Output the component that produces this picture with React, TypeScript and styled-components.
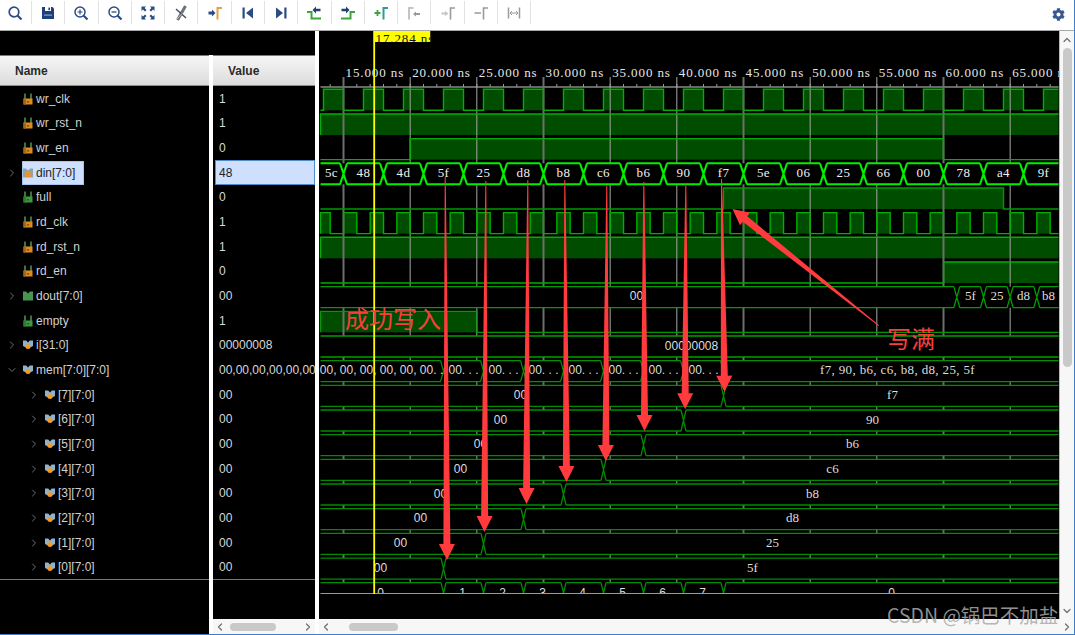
import React from "react";
import styled, { createGlobalStyle, css } from "styled-components";
import { ChevronDown, ChevronLeft, ChevronRight, ChevronUp } from "lucide-react";
import { FaCog } from "react-icons/fa";

const Global = createGlobalStyle`
  html, body { margin: 0; padding: 0; background: #fff; overflow: hidden; }
  #root { width: 1075px; height: 635px; }
`;

const Page = styled.div`
  position: relative;
  box-sizing: border-box;
  width: 1075px;
  height: 635px;
  display: flex;
  flex-direction: column;
  background: #fff;
  border-right: 1px solid #3f7fc8;
  border-bottom: 1px solid #3f7fc8;
  overflow: hidden;
  font-family: "Liberation Sans", Arial, sans-serif;
`;

const Toolbar = styled.div`
  box-sizing: border-box;
  height: 31px;
  flex: none;
  display: flex;
  align-items: center;
  padding-bottom: 5px;
  border-bottom: 1px solid #a8a8a8;
  background: #fff;
  & > :first-child { margin-left: -1.4px; }
`;

const ToolButton = styled.div`
  box-sizing: border-box;
  width: 33.3px;
  height: 23px;
  flex: none;
  display: flex;
  align-items: center;
  justify-content: center;
  border-right: 1px solid #e2e2e2;
`;

const GearButton = styled.div`
  margin-left: auto;
  padding-right: 9px;
  padding-top: 3px;
  display: flex;
  color: #38598f;
`;

const Main = styled.div`
  flex: 1;
  min-height: 0;
  display: flex;
`;

const LeftPane = styled.div`
  width: 314.5px;
  flex: none;
  display: flex;
  flex-direction: column;
`;

const TopBand = styled.div`
  height: 24px;
  flex: none;
  background: #000;
`;

const Columns = styled.div`
  flex: 1;
  min-height: 0;
  display: flex;
  gap: 4.5px;
`;

const NameColumn = styled.div`
  width: 208.5px;
  flex: none;
  display: flex;
  flex-direction: column;
  background: #000;
`;

const ValueColumn = styled.div`
  flex: 1;
  min-width: 0;
  display: flex;
  flex-direction: column;
`;

const HeaderCell = styled.div<{ $pad: number }>`
  box-sizing: border-box;
  height: 31px;
  flex: none;
  display: flex;
  align-items: center;
  padding-left: ${(p) => p.$pad}px;
  background: linear-gradient(#f6f6f6, #dcdcdc);
  border-top: 1px solid #7a7a7a;
  border-bottom: 1px solid #8c8c8c;
  font-size: 12px;
  font-weight: 700;
  color: #2a2a2a;
`;

const RowList = styled.div`
  flex: 1;
  min-height: 0;
  background: #000;
`;

const RowStack = styled.div`
  height: 493.4px;
  border-bottom: 1px solid #777;
`;

const NameRow = styled.div<{ $depth: number }>`
  box-sizing: border-box;
  height: 24.67px;
  display: flex;
  align-items: center;
  padding-top: 1px;
  padding-left: ${(p) => (p.$depth ? 28 : 6)}px;
`;

const Expander = styled.span`
  width: 12px;
  flex: none;
  margin-right: 3.5px;
  display: flex;
  justify-content: center;
  color: #8a8a8a;
`;

const NameCell = styled.div<{ $selected?: boolean }>`
  box-sizing: border-box;
  height: 23.67px;
  display: flex;
  align-items: center;
  gap: 3px;
  padding: 0 8px 0 0.5px;
  border: 1px solid transparent;
  font-size: 12px;
  color: #d2d2d2;
  white-space: nowrap;
  ${(p) =>
    p.$selected &&
    css`
      background: #cfe0ff;
      border-color: #a6c4ea;
      color: #222;
    `}
`;

const ValueRow = styled.div<{ $selected?: boolean }>`
  box-sizing: border-box;
  height: 24.67px;
  display: flex;
  align-items: center;
  padding-top: 1px;
  padding-left: 6px;
  font-size: 12px;
  color: #d8d8d8;
  white-space: nowrap;
  overflow: hidden;
  ${(p) =>
    p.$selected &&
    css`
      margin-left: 2px;
      padding-left: 3px;
      background: #cfe0ff;
      border: 1px solid #4f8ccb;
      color: #222;
    `}
`;

const HScroll = styled.div`
  height: 15px;
  flex: none;
  display: flex;
  align-items: center;
  background: #f7f7f7;
  color: #6e6e6e;
`;

const ScrollEnd = styled.span<{ $right?: boolean }>`
  display: flex;
  width: 14px;
  justify-content: center;
  flex: none;
  ${(p) => p.$right && "margin-left: auto;"}
`;

const HThumb = styled.div<{ $left: number; $width: number }>`
  height: 8px;
  margin-left: ${(p) => p.$left}px;
  width: ${(p) => p.$width}px;
  border-radius: 4px;
  background: #c9c9c9;
`;

const Splitter = styled.div`
  width: 4px;
  flex: none;
`;

const RightPane = styled.div`
  flex: 1;
  min-width: 0;
  display: flex;
  flex-direction: column;
`;

const WaveArea = styled.div`
  flex: 1;
  min-height: 0;
  display: flex;
`;

const WaveSvg = styled.svg`
  display: block;
  width: 740.5px;
  height: 588px;
  flex: none;
  background: #000;
`;

const VScroll = styled.div`
  flex: 1;
  display: flex;
  flex-direction: column;
  align-items: center;
  background: #f7f7f7;
  border-left: 1px solid #b8b8b8;
  color: #6e6e6e;
`;

const VEnd = styled.span<{ $bottom?: boolean }>`
  display: flex;
  height: 17px;
  align-items: center;
  ${(p) => p.$bottom && "margin-top: auto; padding-bottom: 0;"}
`;

const VThumb = styled.div`
  width: 9px;
  height: 319px;
  border-radius: 4.5px;
  background: #c9c9c9;
`;

const Watermark = styled.div`
  position: absolute;
  left: 887px;
  top: 601px;
  font-family: "Noto Sans CJK SC", "Liberation Sans", sans-serif;
  font-size: 19.5px;
  line-height: 28px;
  color: rgba(170, 170, 170, 0.85);
  white-space: nowrap;
`;

const TimeLabel = styled.text`
  font-family: "Liberation Serif", serif;
  font-size: 13px;
  letter-spacing: 0.9px;
  fill: #e6e6e6;
`;

const CursorLabel = styled.text`
  font-family: "Liberation Serif", serif;
  font-size: 13px;
  letter-spacing: 0.9px;
  fill: #111;
`;

const BusText = styled.text<{ $sans?: boolean }>`
  font-family: ${(p) => (p.$sans ? '"Liberation Sans", sans-serif' : '"Liberation Serif", serif')};
  font-size: ${(p) => (p.$sans ? 12 : 13)}px;
  fill: #dedede;
  text-anchor: middle;
`;

const DinText = styled(BusText)`
  fill: #f2f2f2;
  letter-spacing: 0.4px;
`;

const MemValues = styled(BusText)`
  letter-spacing: 0.35px;
`;

const Note = styled.text`
  font-family: "Noto Sans CJK SC", sans-serif;
  font-size: 24px;
  font-weight: 400;
  fill: #f63f3f;
`;

const ArrowShape = styled.polygon`
  fill: #ff3b3d;
`;

const X0 = 320;
const X1 = 1058;
const PITCH = 24.67;
const top = (i: number) => 89.3 + PITCH * i;
const bot = (i: number) => top(i) + 21;

const TICKS = Array.from({ length: 11 }, (_, k) => 343 + (200 / 3) * k);
const MINOR = Array.from({ length: 56 }, (_, k) => 329.67 + (40 / 3) * k).filter((x) => x < X1);

type Span = [number, number];

function clock(firstRise: number, high: number, period: number, lead?: Span): Span[] {
  const out: Span[] = lead ? [lead] : [];
  for (let r = firstRise; r < X1; r += period) out.push([r, Math.min(r + high, X1)]);
  return out;
}

const DIGITAL: { row: number; spans: Span[] }[] = [
  { row: 0, spans: clock(323, 20, 40) },
  { row: 1, spans: [[X0, X1]] },
  { row: 2, spans: [[409.7, 943]] },
  { row: 4, spans: [[723, 1003]] },
  { row: 5, spans: clock(343, 13.33, 80 / 3, [X0, 329.7]) },
  { row: 6, spans: [[X0, X1]] },
  { row: 7, spans: [[943, X1]] },
  { row: 9, spans: [[X0, 476.5]] },
];

function digitalPath(row: number, spans: Span[]) {
  let d = `M${X0} ${bot(row)}`;
  spans.forEach(([s, e]) => {
    d += `H${s}V${top(row)}H${e}`;
    if (e < X1) d += `V${bot(row)}`;
  });
  if (spans[spans.length - 1][1] < X1) d += `H${X1}`;
  return d;
}

function busPath(row: number, xs: number[], c: number) {
  const t = top(row);
  const b = bot(row);
  let d = "";
  const pts = [X0 - c, ...xs, X1 + c];
  for (let i = 0; i < pts.length - 1; i++) {
    const a = pts[i] + c;
    const z = pts[i + 1] - c;
    d += `M${a} ${t}H${z}M${a} ${b}H${z}`;
  }
  xs.forEach((x) => {
    d += `M${x - c} ${t}L${x + c} ${b}M${x - c} ${b}L${x + c} ${t}`;
  });
  return d;
}

const DIN_X = Array.from({ length: 18 }, (_, k) => 343 + 40 * k);
const DIN_V = ["48", "4d", "5f", "25", "d8", "b8", "c6", "b6", "90", "f7", "5e", "06", "25", "66", "00", "78", "a4", "9f"];
const DOUT_X = [956.3, 983, 1009.6, 1036.3];
const MEM_X = [443, 483, 523, 563, 603, 643, 683, 723];

const BITS = [
  { row: 12, x: 723, l: 520, r: 892, v: "f7" },
  { row: 13, x: 683, l: 500, r: 872, v: "90" },
  { row: 14, x: 643, l: 480, r: 852, v: "b6" },
  { row: 15, x: 603, l: 460, r: 832, v: "c6" },
  { row: 16, x: 563, l: 440, r: 812, v: "b8" },
  { row: 17, x: 523, l: 420, r: 792, v: "d8" },
  { row: 18, x: 483, l: 400, r: 772, v: "25" },
  { row: 19, x: 443, l: 380, r: 752, v: "5f" },
];

function arrowPoints(tx: number, ty: number, hx: number, hy: number) {
  const dx = hx - tx;
  const dy = hy - ty;
  const len = Math.hypot(dx, dy);
  const ux = dx / len;
  const uy = dy / len;
  const px = -uy;
  const py = ux;
  const bx = hx - ux * 16;
  const by = hy - uy * 16;
  const p = (x: number, y: number) => `${x.toFixed(1)},${y.toFixed(1)}`;
  return [
    p(tx + px * 0.5, ty + py * 0.5),
    p(bx + px * 3.5, by + py * 3.5),
    p(bx + px * 8, by + py * 8),
    p(hx, hy),
    p(bx - px * 8, by - py * 8),
    p(bx - px * 3.5, by - py * 3.5),
    p(tx - px * 0.5, ty - py * 0.5),
  ].join(" ");
}

const ARROWS: [number, number, number, number][] = [
  [444.7, 177, 446.5, 560],
  [485.3, 181, 484, 532],
  [527.3, 180, 526, 504],
  [564.3, 180, 566, 482],
  [606.3, 185, 605.3, 461],
  [643.3, 182, 644, 431],
  [685.3, 184, 684.7, 409.3],
  [721, 179, 724, 391.7],
  [878.3, 325.7, 732, 209],
];

function Waves() {
  return (
    <WaveSvg viewBox="318.5 31 740.5 588" aria-label="waveform">
      {DIGITAL.map(({ row, spans }) =>
        spans.map(([s, e]) => (
          <rect key={`${row}-${s}`} x={s} y={top(row)} width={e - s} height={21} fill="#004d00" />
        ))
      )}
      <path d={`M${X0} 87H${X1}`} stroke="#8a8a8a" strokeWidth={1.5} />
      {MINOR.map((x) => (
        <path key={x} d={`M${x} 84V87`} stroke="#999" strokeWidth={1} />
      ))}
      {TICKS.map((x, k) => (
        <path
          key={x}
          d={`M${x} 77V593`}
          stroke={k % 3 === 0 ? "#6e6e6e" : "#a8a8a8"}
          strokeWidth={k % 3 === 0 ? 2 : 1}
        />
      ))}
      {TICKS.map((x, k) => (
        <TimeLabel key={x} x={x + 2} y={77}>{`${15 + k * 5}.000 ns`}</TimeLabel>
      ))}
      {[3, 8, 10, 11, 12, 13, 14, 15, 16, 17, 18, 19, 20].map((r) => (
        <rect key={r} x={X0} y={top(r)} width={X1 - X0} height={21} fill="#000" />
      ))}
      {DIGITAL.map(({ row, spans }) => (
        <path
          key={row}
          d={digitalPath(row, spans)}
          fill="none"
          stroke={row === 4 || row === 9 ? "#009a00" : "#00b000"}
          strokeWidth={1.4}
        />
      ))}
      <path d={busPath(3, DIN_X, 3.5)} fill="none" stroke="#00f000" strokeWidth={2} />
      <DinText x={331} y={177}>5c</DinText>
      {DIN_V.map((v, k) => (
        <DinText key={k} x={363 + 40 * k} y={177}>
          {v}
        </DinText>
      ))}
      <path d={busPath(8, DOUT_X, 3)} fill="none" stroke="#00a000" strokeWidth={1.3} />
      <BusText $sans x={636} y={300}>00</BusText>
      <BusText x={970} y={300}>5f</BusText>
      <BusText x={996.5} y={300}>25</BusText>
      <BusText x={1023} y={300}>d8</BusText>
      <BusText x={1048} y={300}>b8</BusText>
      <path d={busPath(10, [], 3)} fill="none" stroke="#00a000" strokeWidth={1.3} />
      <BusText $sans x={691} y={349.5}>00000008</BusText>
      <path d={busPath(11, MEM_X, 3)} fill="none" stroke="#009000" strokeWidth={1.3} />
      <BusText $sans x={381} y={374}>00, 00, 00, 00, 00, 00. .</BusText>
      {MEM_X.slice(0, 7).map((x) => (
        <BusText $sans key={x} x={x + 20} y={374}>
          00. . .
        </BusText>
      ))}
      <MemValues x={897} y={374}>f7, 90, b6, c6, b8, d8, 25, 5f</MemValues>
      {BITS.map((b) => (
        <g key={b.row}>
          <path d={busPath(b.row, [b.x], 2.5)} fill="none" stroke="#008c00" strokeWidth={1.3} />
          <BusText $sans x={b.l} y={top(b.row) + 13.5}>00</BusText>
          <BusText x={b.r} y={top(b.row) + 13.5}>{b.v}</BusText>
        </g>
      ))}
      <path d={busPath(20, MEM_X, 2.5)} fill="none" stroke="#008c00" strokeWidth={1.3} />
      {["0", "1", "2", "3", "4", "5", "6", "7", "0"].map((v, k) => (
        <BusText $sans key={k} x={k === 0 ? 380 : k === 8 ? 891 : 422 + 40 * k} y={596.5}>
          {v}
        </BusText>
      ))}
      <rect x={318} y={593.5} width={741} height={26} fill="#000" />
      <path d={`M${X0} 593.5H${X1}`} stroke="#9a9a9a" strokeWidth={1.2} />
      <path d="M373.7 31V594" stroke="#ffff00" strokeWidth={1.8} />
      <svg x={373} y={31} width={57} height={11}>
        <rect width={57} height={11} fill="#ffff00" />
        <CursorLabel x={2} y={11.5}>17.284 ns</CursorLabel>
      </svg>
      <Note x={344.5} y={328}>成功写入</Note>
      <Note x={886.5} y={348}>写满</Note>
      {ARROWS.map(([a, b, c, d]) => (
        <ArrowShape key={a} points={arrowPoints(a, b, c, d)} />
      ))}
    </WaveSvg>
  );
}

type IconKind = "in" | "out" | "busIn" | "busOut" | "mem";

function SignalIcon({ kind }: { kind: IconKind }) {
  if (kind === "in" || kind === "out") {
    const body = kind === "in" ? "#e08a1e" : "#3f9a3f";
    const dark = kind === "in" ? "#9a6a22" : "#2e7a2e";
    return (
      <svg width={10} height={12} viewBox="0 0 10 12" style={{ flex: "none" }}>
        <path d="M2 0.5V6M8 0.5V6" stroke="#4c8f4c" strokeWidth={1.6} />
        <rect x={0.5} y={5.5} width={9} height={6} fill={body} />
        <rect x={0.5} y={5.5} width={2.5} height={6} fill={dark} />
        <rect x={3.8} y={8} width={2.4} height={1.6} fill="#222" opacity={0.5} />
      </svg>
    );
  }
  if (kind === "busIn" || kind === "busOut") {
    const center = kind === "busIn" ? "#f0941f" : "#3f9a3f";
    const wing = kind === "busIn" ? "#8ea3ad" : "#4f8f5a";
    return (
      <svg width={10} height={12} viewBox="0 0 10 12" style={{ flex: "none" }}>
        <path d="M0 1.5H3L5 3.5L7 1.5H10V10.5H0Z" fill={wing} />
        <rect x={2.5} y={4.5} width={5} height={5.5} fill={center} />
      </svg>
    );
  }
  return (
    <svg width={10} height={12} viewBox="0 0 10 12" style={{ flex: "none" }}>
      <path d="M0 1.5H3.2L5 3.5L6.8 1.5H10V7L7 8.5H3L0 7Z" fill="#8fb3cc" />
      <circle cx={5} cy={7.5} r={2.5} fill="#f59a23" />
    </svg>
  );
}

const ROWS: { name: string; value: string; icon: IconKind; depth?: number; exp?: "r" | "d"; sel?: boolean }[] = [
  { name: "wr_clk", value: "1", icon: "in" },
  { name: "wr_rst_n", value: "1", icon: "in" },
  { name: "wr_en", value: "0", icon: "in" },
  { name: "din[7:0]", value: "48", icon: "busIn", exp: "r", sel: true },
  { name: "full", value: "0", icon: "out" },
  { name: "rd_clk", value: "1", icon: "in" },
  { name: "rd_rst_n", value: "1", icon: "in" },
  { name: "rd_en", value: "0", icon: "in" },
  { name: "dout[7:0]", value: "00", icon: "busOut", exp: "r" },
  { name: "empty", value: "1", icon: "out" },
  { name: "i[31:0]", value: "00000008", icon: "mem", exp: "r" },
  { name: "mem[7:0][7:0]", value: "00,00,00,00,00,00,00,00", icon: "mem", exp: "d" },
  ...[7, 6, 5, 4, 3, 2, 1, 0].map((n) => ({
    name: `[${n}][7:0]`,
    value: "00",
    icon: "mem" as IconKind,
    depth: 1,
    exp: "r" as const,
  })),
];

const B = "#2b4c82";
const G = "#3aa63a";
const O = "#e6a23c";
const D = "#c4c4c4";
const DD = "#9a9a9a";

const TOOL_ICONS: React.ReactNode[] = [
  <g key="a" fill="none" stroke={B}>
    <circle cx={7} cy={7} r={4.8} strokeWidth={1.7} />
    <path d="M10.5 10.5L14.5 14.5" strokeWidth={2.2} />
  </g>,
  <g key="b">
    <path d="M2 2H12.5L14 3.5V14H2Z" fill="#1d3f7c" />
    <rect x={5} y={2} width={6} height={4} fill="#fff" />
    <rect x={8.4} y={2.6} width={1.6} height={2.6} fill="#1d3f7c" />
    <rect x={4} y={9.5} width={8} height={1.2} fill="#8fa3c4" />
  </g>,
  <g key="c" fill="none" stroke={B}>
    <circle cx={7} cy={7} r={5} strokeWidth={1.5} />
    <path d="M4.5 7H9.5M7 4.5V9.5" strokeWidth={1.2} />
    <path d="M10.7 10.7L14.5 14.5" strokeWidth={2.2} />
  </g>,
  <g key="d" fill="none" stroke={B}>
    <circle cx={7} cy={7} r={5} strokeWidth={1.5} />
    <path d="M4.5 7H9.5" strokeWidth={1.3} />
    <path d="M10.7 10.7L14.5 14.5" strokeWidth={2.2} />
  </g>,
  <g key="e" fill={B}>
    <path d="M1.5 1.5H6L4.6 3L6.5 5L5 6.5L3 4.6L1.5 6Z" />
    <path d="M14.5 1.5H10L11.4 3L9.5 5L11 6.5L13 4.6L14.5 6Z" />
    <path d="M1.5 14.5H6L4.6 13L6.5 11L5 9.5L3 11.4L1.5 10Z" />
    <path d="M14.5 14.5H10L11.4 13L9.5 11L11 9.5L13 11.4L14.5 10Z" />
  </g>,
  <g key="f" fill="none">
    <path d="M4.5 15L12.5 1" stroke="#6f7378" strokeWidth={3} />
    <path d="M3 4L13 13" stroke="#3c4a5c" strokeWidth={1.4} />
    <path d="M4 14L9.5 8" stroke="#b9bcc0" strokeWidth={1} />
  </g>,
  <g key="g">
    <path d="M1.5 6.5H5V4.5L8.5 8L5 11.5V9.5H1.5Z" fill={B} />
    <path d="M10.5 14.5V3H15" fill="none" stroke={O} strokeWidth={2} />
  </g>,
  <g key="h" fill={B}>
    <rect x={2.5} y={2.5} width={2.2} height={11} />
    <path d="M13 2.5V13.5L6 8Z" />
  </g>,
  <g key="i" fill={B}>
    <rect x={11.3} y={2.5} width={2.2} height={11} />
    <path d="M3 2.5V13.5L10 8Z" />
  </g>,
  <g key="j">
    <path d="M1 7H5.5V13.5H15" fill="none" stroke={G} strokeWidth={2} />
    <path d="M6.5 5L10 1.5V3.8H14.5V6.2H10V8.5Z" fill="#23406f" />
  </g>,
  <g key="k">
    <path d="M1 13.5H10.5V7H15" fill="none" stroke={G} strokeWidth={2} />
    <path d="M9.5 5L6 1.5V3.8H1.5V6.2H6V8.5Z" fill="#23406f" />
  </g>,
  <g key="l" fill="none">
    <path d="M1.5 8H7.5M4.5 5V11" stroke={G} strokeWidth={1.8} />
    <path d="M10.5 14.5V3H15" stroke="#2f9a9a" strokeWidth={2} />
  </g>,
  <g key="m">
    <path d="M3 14.5V3H7.5" fill="none" stroke={D} strokeWidth={2} />
    <path d="M7 9L10 6.5V8H14V10H10V11.5Z" fill={DD} />
  </g>,
  <g key="n">
    <path d="M1.5 7.5H5V6L8.5 8.5L5 11V9.5H1.5Z" fill={D} />
    <path d="M10.5 14.5V3H15" fill="none" stroke={DD} strokeWidth={1.6} />
  </g>,
  <g key="o" fill="none">
    <path d="M1.5 8H8" stroke={DD} strokeWidth={1.5} />
    <path d="M10.5 14.5V3H15" stroke={DD} strokeWidth={1.6} />
  </g>,
  <g key="p" fill="none" stroke={DD}>
    <path d="M2.5 2.5V13.5M13.5 2.5V13.5" strokeWidth={1.5} />
    <path d="M4 8H12M6 6L4 8L6 10M10 6L12 8L10 10" strokeWidth={1} />
  </g>,
];

export default function App() {
  return (
    <Page>
      <Global />
      <Toolbar>
        {TOOL_ICONS.map((icon, i) => (
          <ToolButton key={i}>
            <svg width={16} height={16} viewBox="0 0 16 16">
              {icon}
            </svg>
          </ToolButton>
        ))}
        <GearButton>
          <FaCog size={13} />
        </GearButton>
      </Toolbar>
      <Main>
        <LeftPane>
          <TopBand />
          <Columns>
            <NameColumn>
              <HeaderCell $pad={15}>Name</HeaderCell>
              <RowList>
                <RowStack>
                  {ROWS.map((r) => (
                    <NameRow key={r.name} $depth={r.depth ?? 0}>
                      <Expander>
                        {r.exp === "r" && <ChevronRight size={12} strokeWidth={1.6} />}
                        {r.exp === "d" && <ChevronDown size={12} strokeWidth={1.6} />}
                      </Expander>
                      <NameCell $selected={r.sel}>
                        <SignalIcon kind={r.icon} />
                        {r.name}
                      </NameCell>
                    </NameRow>
                  ))}
                </RowStack>
              </RowList>
            </NameColumn>
            <ValueColumn>
              <HeaderCell $pad={15}>Value</HeaderCell>
              <RowList>
                <RowStack>
                  {ROWS.map((r) => (
                    <ValueRow key={r.name} $selected={r.sel}>
                      {r.value}
                    </ValueRow>
                  ))}
                </RowStack>
              </RowList>
              <HScroll>
                <ScrollEnd>
                  <ChevronLeft size={12} strokeWidth={2.4} />
                </ScrollEnd>
                <HThumb $left={3} $width={46} />
                <ScrollEnd $right>
                  <ChevronRight size={12} strokeWidth={2.4} />
                </ScrollEnd>
              </HScroll>
            </ValueColumn>
          </Columns>
        </LeftPane>
        <Splitter />
        <RightPane>
          <WaveArea>
            <Waves />
            <VScroll>
              <VEnd>
                <ChevronUp size={12} strokeWidth={2.4} />
              </VEnd>
              <VThumb />
              <VEnd $bottom>
                <ChevronDown size={12} strokeWidth={2.4} />
              </VEnd>
            </VScroll>
          </WaveArea>
          <HScroll>
            <ScrollEnd>
              <ChevronLeft size={12} strokeWidth={2.4} />
            </ScrollEnd>
            <HThumb $left={16} $width={49} />
            <ScrollEnd $right>
              <ChevronRight size={12} strokeWidth={2.4} />
            </ScrollEnd>
          </HScroll>
        </RightPane>
      </Main>
      <Watermark>CSDN @锅巴不加盐</Watermark>
    </Page>
  );
}
